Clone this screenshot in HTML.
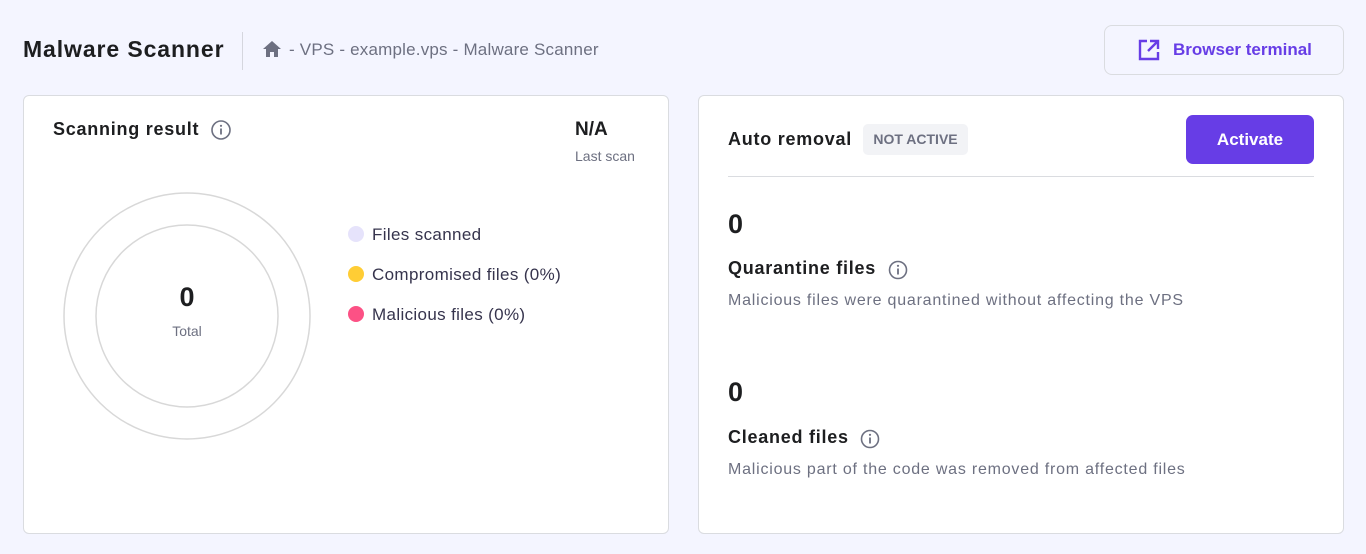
<!DOCTYPE html>
<html><head><meta charset="utf-8"><style>
*{margin:0;padding:0;box-sizing:border-box}
body{width:1366px;height:554px;background:#f4f5ff;font-family:"Liberation Sans",sans-serif;color:#1d1e20;position:relative;overflow:hidden}
.a{position:absolute;white-space:nowrap}
.card{position:absolute;background:#fff;border:1px solid #dadce0;border-radius:6px}
.muted{color:#6d7081}
.dot{position:absolute;width:16px;height:16px;border-radius:50%}
.h{letter-spacing:0.75px}
</style></head><body>
<div class="a" style="left:23px;top:36px;font-size:23px;font-weight:bold;letter-spacing:0.9px">Malware Scanner</div>
<div class="a" style="left:242px;top:32px;width:1px;height:38px;background:#d5d6de"></div>
<svg class="a" style="left:262px;top:40px" width="20" height="18" viewBox="0 0 20 18"><path d="M10 1 L1 9 H4 V17 H8 V12 H12 V17 H16 V9 H19 Z" fill="#6d7081"/></svg>
<div class="a muted" style="left:289px;top:40px;font-size:17px;letter-spacing:0.2px">- VPS - example.vps - Malware Scanner</div>
<div class="a" style="left:1104px;top:25px;width:240px;height:50px;border:1px solid #dadce0;border-radius:8px"></div>
<svg class="a" style="left:1137px;top:38px" width="24" height="24" viewBox="0 0 24 24" fill="none" stroke="#673de6" stroke-width="2.4"><path d="M10 3H3V21H21V14"/><path d="M13 3H21V11M21 3L11 13"/></svg>
<div class="a" style="left:1173px;top:40px;font-size:17px;font-weight:bold;color:#673de6">Browser terminal</div>

<div class="card" style="left:23px;top:95px;width:646px;height:439px"></div>
<div class="a h" style="left:53px;top:119px;font-size:18px;font-weight:bold">Scanning result</div>
<svg class="a" style="left:210px;top:119px" width="22" height="22" viewBox="0 0 22 22"><circle cx="11" cy="11" r="9" fill="none" stroke="#6d7081" stroke-width="1.6"/><rect x="10.1" y="9.5" width="1.8" height="6" fill="#6d7081"/><circle cx="11" cy="6.8" r="1.1" fill="#6d7081"/></svg>
<div class="a" style="left:575px;top:119px;font-size:19px;font-weight:bold">N/A</div>
<div class="a muted" style="left:575px;top:148px;font-size:14px">Last scan</div>
<svg class="a" style="left:60px;top:190px" width="254" height="254"><circle cx="127" cy="126" r="123" fill="none" stroke="#d8d8d8" stroke-width="1.5"/><circle cx="127" cy="126" r="91" fill="none" stroke="#d8d8d8" stroke-width="1.5"/></svg>
<div class="a" style="left:0;width:374px;text-align:center;top:282px;font-size:27px;font-weight:bold">0</div>
<div class="a muted" style="left:0;width:374px;text-align:center;top:323px;font-size:14px">Total</div>
<div class="dot" style="left:348px;top:226px;background:#e6e3fb"></div>
<div class="dot" style="left:348px;top:266px;background:#ffcd35"></div>
<div class="dot" style="left:348px;top:306px;background:#fc5185"></div>
<div class="a" style="left:372px;top:225px;font-size:17px;color:#36344d;letter-spacing:0.35px">Files scanned</div>
<div class="a" style="left:372px;top:265px;font-size:17px;color:#36344d;letter-spacing:0.35px">Compromised files (0%)</div>
<div class="a" style="left:372px;top:305px;font-size:17px;color:#36344d;letter-spacing:0.35px">Malicious files (0%)</div>

<div class="card" style="left:698px;top:95px;width:646px;height:439px"></div>
<div class="a h" style="left:728px;top:129px;font-size:18px;font-weight:bold">Auto removal</div>
<div class="a" style="left:863px;top:124px;width:105px;height:31px;background:#f2f3f6;border-radius:5px;font-size:14px;font-weight:bold;color:#6d7081;text-align:center;line-height:31px">NOT ACTIVE</div>
<div class="a" style="left:1186px;top:115px;width:128px;height:49px;background:#673de6;border-radius:7px;color:#fff;font-size:17px;font-weight:bold;text-align:center;line-height:49px">Activate</div>
<div class="a" style="left:728px;top:176px;width:586px;height:1px;background:#dadce0"></div>
<div class="a" style="left:728px;top:209px;font-size:27px;font-weight:bold">0</div>
<div class="a h" style="left:728px;top:258px;font-size:18px;font-weight:bold">Quarantine files</div>
<svg class="a" style="left:887px;top:259px" width="22" height="22" viewBox="0 0 22 22"><circle cx="11" cy="11" r="8.5" fill="none" stroke="#6d7081" stroke-width="1.6"/><rect x="10.1" y="9.5" width="1.8" height="6" fill="#6d7081"/><circle cx="11" cy="6.8" r="1.1" fill="#6d7081"/></svg>
<div class="a muted" style="left:728px;top:292px;font-size:16px;letter-spacing:0.78px">Malicious files were quarantined without affecting the VPS</div>
<div class="a" style="left:728px;top:377px;font-size:27px;font-weight:bold">0</div>
<div class="a h" style="left:728px;top:427px;font-size:18px;font-weight:bold">Cleaned files</div>
<svg class="a" style="left:859px;top:428px" width="22" height="22" viewBox="0 0 22 22"><circle cx="11" cy="11" r="8.5" fill="none" stroke="#6d7081" stroke-width="1.6"/><rect x="10.1" y="9.5" width="1.8" height="6" fill="#6d7081"/><circle cx="11" cy="6.8" r="1.1" fill="#6d7081"/></svg>
<div class="a muted" style="left:728px;top:461px;font-size:16px;letter-spacing:0.78px">Malicious part of the code was removed from affected files</div>
</body></html>
